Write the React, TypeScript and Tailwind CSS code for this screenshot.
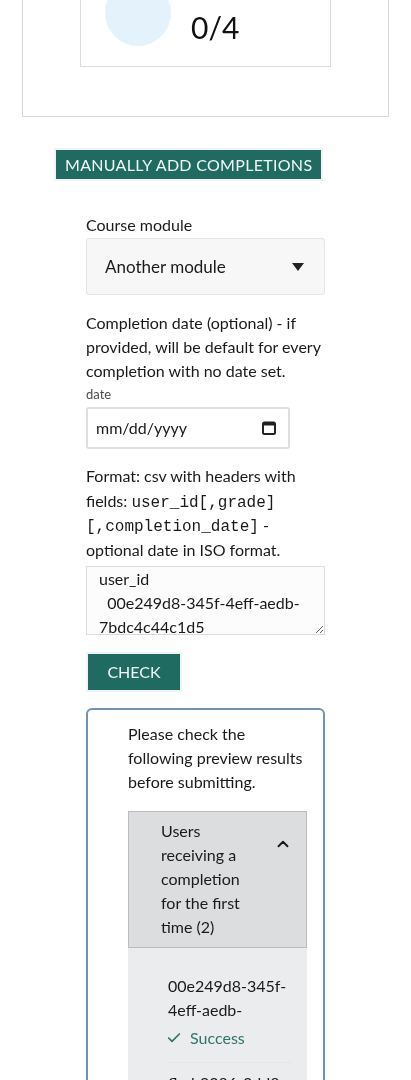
import { ChevronUp, Check } from 'lucide-react';

const font = { fontFamily: 'Lato, "Open Sans", sans-serif' };

function ProgressCard() {
    return (
        <div className="mx-[22px] -mt-[90px] border border-[#d6d6d6] pt-[48px] pb-[49px]">
            <div className="mx-auto w-[251px] border border-[#dadada] py-[20px] pl-[24px] flex items-center gap-[20px]">
                <div className="w-[66px] h-[66px] rounded-full bg-[#e4f3fb]" />
                <span className="mt-[28px] text-[30px] leading-none text-[#111]">0/4</span>
            </div>
        </div>
    );
}

function PreviewResults() {
    return (
        <div className="mt-[16px] border-2 border-[#7192b1] rounded-[6px] pl-[40px] pr-[16px] pt-[12px] pb-[40px]">
            <p className="text-[16px] leading-[24px] text-[#1a1a1a]">
                Please check the following preview results before submitting.
            </p>
            <div className="mt-[17px]">
                <div className="border border-[#b9bcc0] bg-[#dcdddf] pl-[32px] pt-[7px] pb-[8px] flex">
                    <span className="w-[96px] text-[16px] leading-[24px] text-[#1a1a1a]">
                        Users receiving a completion for the first time (2)
                    </span>
                    <ChevronUp className="ml-[17px] mt-[16px] w-[18px] h-[18px] text-[#1a1a1a]" strokeWidth={2.5} />
                </div>
                <div className="bg-[#ebeced] pl-[40px] pr-[16px] pt-[26px]">
                    <div className="pb-[12px] border-b border-dotted border-[#dfe0e2]">
                        <p className="text-[16px] leading-[24px] text-[#1a1a1a] max-h-[48px] overflow-hidden">
                            00e249d8-345f-4eff-aedb-7bdc4c44c1d5
                        </p>
                        <div className="mt-[4px] -ml-[2px] flex items-center gap-[8px] text-[#2f7569] text-[16px] leading-[24px]">
                            <Check className="w-[16px] h-[16px]" strokeWidth={2.5} />
                            <span>Success</span>
                        </div>
                    </div>
                    <p className="pt-[8px] text-[16px] leading-[24px] text-[#1a1a1a] max-h-[56px] overflow-hidden">
                        fbeb9286-3dd8-4a1c-9f2e-0b7d1c2e5a44
                    </p>
                </div>
            </div>
        </div>
    );
}

export default function App() {
    return (
        <div className="bg-white min-h-[1080px] overflow-hidden text-[#1a1a1a]" style={font}>
            <ProgressCard />

            {/* Manual completions */}
            <div className="mt-[31px] ml-[54px]">
                <button className="border-2 border-[#f1f3f4] bg-[#1f6b62] text-[#f4f8f7] text-[16px] leading-[29px] px-[9px] uppercase tracking-[0.3px]">
                    Manually add completions
                </button>
            </div>

            <div className="ml-[86px] w-[239px] mt-[32px]">
                <label className="block text-[16px] leading-[24px]">Course module</label>
                <div className="mt-[1px] h-[57px] bg-[#f7f7f7] border border-[#e4e4e4] rounded-[3px] flex items-center pl-[18px] pr-[20px]">
                    <span className="flex-1 text-[17px]">Another module</span>
                    <svg width="12" height="8" viewBox="0 0 12 8">
                        <path d="M0 0 H12 L6 8 Z" fill="#222" />
                    </svg>
                </div>

                <p className="mt-[16px] text-[16px] leading-[24px]">
                    Completion date (optional) - if provided, will be default for every completion with no date set.
                </p>
                <label className="block text-[13px] leading-[22px] text-[#4a4a4a]">date</label>
                <div className="mt-[2px] w-[204px] h-[42px] border-2 border-[#dedede] rounded-[3px] flex items-center pl-[8px] pr-[12px]">
                    <span className="flex-1 text-[16px]">mm/dd/yyyy</span>
                    <svg width="14" height="14" viewBox="0 0 14 14">
                        <rect x="1" y="1.5" width="12" height="11.5" rx="1.5" fill="none" stroke="#222" strokeWidth="2" />
                        <rect x="1" y="1.5" width="12" height="3" fill="#222" />
                    </svg>
                </div>

                <p className="mt-[15px] text-[16px] leading-[24.5px]">
                    Format: csv with headers with fields:{' '}
                    <code className="leading-[16px]" style={{ fontFamily: '"Liberation Mono", "DejaVu Sans Mono", monospace' }}>user_id[,grade][,completion_date]</code>{' '}
                    - optional date in ISO format.
                </p>
                <textarea
                    className="mt-[4px] block w-[239px] h-[69px] border border-[#dcdcdc] bg-[#fcfcfc] pl-[12px] pr-[8px] pt-0 text-[16px] leading-[24px] text-[#1a1a1a] resize-y"
                    style={font}
                    defaultValue={'user_id\n  00e249d8-345f-4eff-aedb-7bdc4c44c1d5'}
                />

                <div className="mt-[17px]">
                    <button className="border-2 border-[#f1f3f4] bg-[#1f6b62] text-[#f4f8f7] text-[16px] leading-[36px] w-[96px] uppercase">
                        Check
                    </button>
                </div>

                <PreviewResults />
            </div>
        </div>
    );
}
